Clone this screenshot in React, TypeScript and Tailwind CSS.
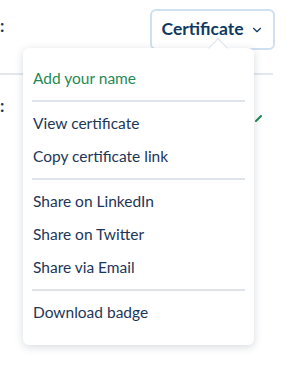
import { ChevronDown } from 'lucide-react';

const items: { label: string; accent?: boolean }[][] = [
  [{ label: 'Add your name', accent: true }],
  [{ label: 'View certificate' }, { label: 'Copy certificate link' }],
  [{ label: 'Share on LinkedIn' }, { label: 'Share on Twitter' }, { label: 'Share via Email' }],
  [{ label: 'Download badge' }],
];

const CertificateMenu: React.FC = () => {
  return (
    <div className="absolute left-[23px] top-[48px] w-[231px] rounded-md bg-white pt-[14px] pb-[16px] shadow-[0_2px_8px_rgba(30,50,80,0.18)]">
      <div className="absolute -top-[7px] left-[188px] h-[14px] w-[14px] rotate-45 border-l border-t border-[#dbe3ec] bg-white" />
      {items.map((group, gi) => (
        <div key={gi}>
          {gi > 0 && <div className="mx-[9px] mt-[5px] mb-[5px] h-[2px] bg-[#dfe4ea]" />}
          {group.map((item) => (
            <div
              key={item.label}
              className={`flex h-[33px] items-center px-[10px] text-[15.5px] ${
                item.accent ? 'text-[#1f8a55]' : 'text-[#1d3658]'
              }`}
            >
              {item.label}
            </div>
          ))}
        </div>
      ))}
    </div>
  );
};

export default function App() {
  return (
    <div className="relative h-[371px] w-[291px] overflow-hidden bg-white font-['Lato',sans-serif]">
      <div className="flex items-start pt-[9px]">
        <span className="mt-[2px] w-[4px] text-[17px] font-bold leading-[30px] text-[#1d3658]">:</span>
        <button className="ml-[146px] flex h-[41px] w-[125px] items-center justify-center gap-[6px] rounded-md border-2 border-[#cfe0f1] bg-white text-[17.5px] font-bold text-[#0f3a62]">
          Certificate
          <ChevronDown size={14} strokeWidth={2} />
        </button>
      </div>
      <div className="mt-[23px] h-[2px] w-[273px] bg-[#e3e8ee]" />
      <div className="flex items-start">
        <span className="mt-[16px] w-[4px] text-[17px] font-bold leading-[30px] text-[#1d3658]">:</span>
        <svg className="ml-[251px] mt-[40px]" width="7" height="7" viewBox="0 0 7 7">
          <path d="M1 6 L6 1" stroke="#1f8a55" strokeWidth="2" strokeLinecap="round" />
        </svg>
      </div>
      <CertificateMenu />
    </div>
  );
}
